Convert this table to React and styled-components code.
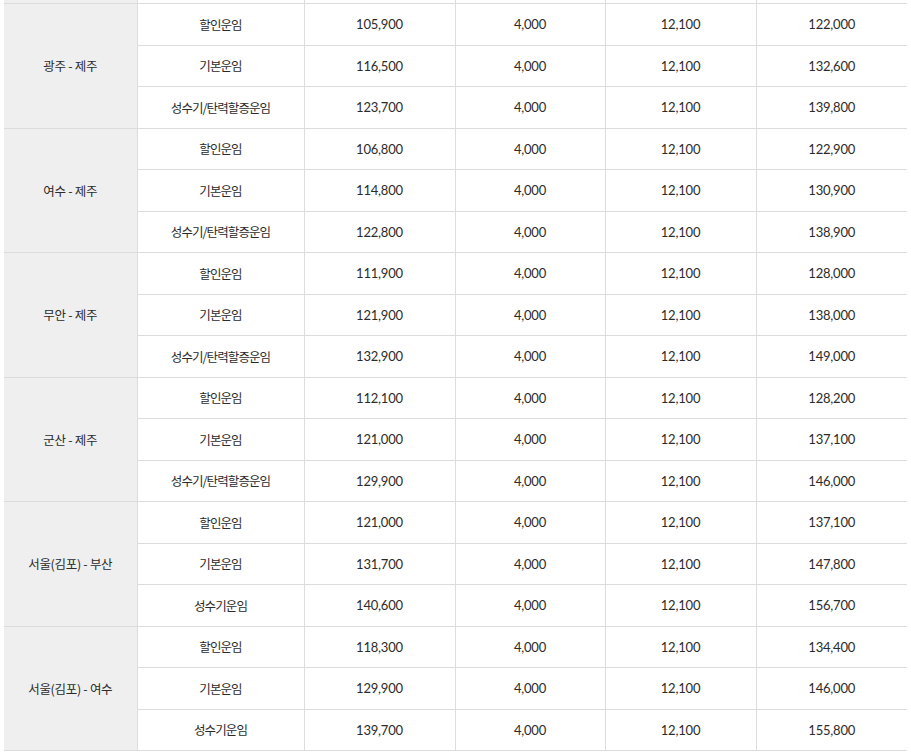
import React from "react";
import styled, { createGlobalStyle } from "styled-components";

const Global = createGlobalStyle`
  html, body { margin: 0; padding: 0; background: #fff; }
  body { font-family: "Noto Sans CJK KR", "Noto Sans", sans-serif; }
`;

const Wrap = styled.div`
  padding: 0 4px;
  overflow: hidden;
  height: 754px;
`;

const Table = styled.table`
  width: 903px;
  border-collapse: collapse;
  table-layout: fixed;
  color: #2b2b2b;
`;

const Col = styled.col`
  width: ${(p) => p.$w}px;
`;

const Cell = styled.td`
  height: 40.5px;
  padding: 0;
  border: 1px solid #dcdcdc;
  text-align: center;
  vertical-align: middle;
  background: #fff;
  font-size: ${(p) => (p.$num ? "13px" : "12.5px")};
  font-family: ${(p) =>
    p.$num ? `Lato, "Noto Sans", sans-serif` : `"Noto Sans CJK KR", sans-serif`};
  letter-spacing: ${(p) => (p.$num ? "-0.2px" : "-0.9px")};
  ${(p) => p.$last && "border-right: none;"}
`;

const RouteCell = styled(Cell)`
  background: #efefef;
  border-left: none;
  letter-spacing: -0.3px;
`;

/* the bottom sliver of the previous (scrolled-away) row */
const SliverCell = styled(Cell)`
  height: 3px;
  border-top: none;
  ${(p) => p.$route && "background: #efefef; border-left: none;"}
`;

const widths = [133, 167, 151, 150, 151, 151];

const data = [
  {
    route: "광주 - 제주",
    rows: [
      ["할인운임", "105,900", "4,000", "12,100", "122,000"],
      ["기본운임", "116,500", "4,000", "12,100", "132,600"],
      ["성수기/탄력할증운임", "123,700", "4,000", "12,100", "139,800"],
    ],
  },
  {
    route: "여수 - 제주",
    rows: [
      ["할인운임", "106,800", "4,000", "12,100", "122,900"],
      ["기본운임", "114,800", "4,000", "12,100", "130,900"],
      ["성수기/탄력할증운임", "122,800", "4,000", "12,100", "138,900"],
    ],
  },
  {
    route: "무안 - 제주",
    rows: [
      ["할인운임", "111,900", "4,000", "12,100", "128,000"],
      ["기본운임", "121,900", "4,000", "12,100", "138,000"],
      ["성수기/탄력할증운임", "132,900", "4,000", "12,100", "149,000"],
    ],
  },
  {
    route: "군산 - 제주",
    rows: [
      ["할인운임", "112,100", "4,000", "12,100", "128,200"],
      ["기본운임", "121,000", "4,000", "12,100", "137,100"],
      ["성수기/탄력할증운임", "129,900", "4,000", "12,100", "146,000"],
    ],
  },
  {
    route: "서울(김포) - 부산",
    rows: [
      ["할인운임", "121,000", "4,000", "12,100", "137,100"],
      ["기본운임", "131,700", "4,000", "12,100", "147,800"],
      ["성수기운임", "140,600", "4,000", "12,100", "156,700"],
    ],
  },
  {
    route: "서울(김포) - 여수",
    rows: [
      ["할인운임", "118,300", "4,000", "12,100", "134,400"],
      ["기본운임", "129,900", "4,000", "12,100", "146,000"],
      ["성수기운임", "139,700", "4,000", "12,100", "155,800"],
    ],
  },
];

export default function App() {
  return (
    <>
      <Global />
      <Wrap>
        <Table>
          <colgroup>
            {widths.map((w, i) => (
              <Col key={i} $w={w} />
            ))}
          </colgroup>
          <tbody>
            <tr>
              <SliverCell $route />
              <SliverCell />
              <SliverCell />
              <SliverCell />
              <SliverCell />
              <SliverCell $last />
            </tr>
            {data.map((g) =>
              g.rows.map((r, i) => (
                <tr key={g.route + i}>
                  {i === 0 && <RouteCell rowSpan={3}>{g.route}</RouteCell>}
                  <Cell>{r[0]}</Cell>
                  <Cell $num>{r[1]}</Cell>
                  <Cell $num>{r[2]}</Cell>
                  <Cell $num>{r[3]}</Cell>
                  <Cell $num $last>
                    {r[4]}
                  </Cell>
                </tr>
              ))
            )}
          </tbody>
        </Table>
      </Wrap>
    </>
  );
}
